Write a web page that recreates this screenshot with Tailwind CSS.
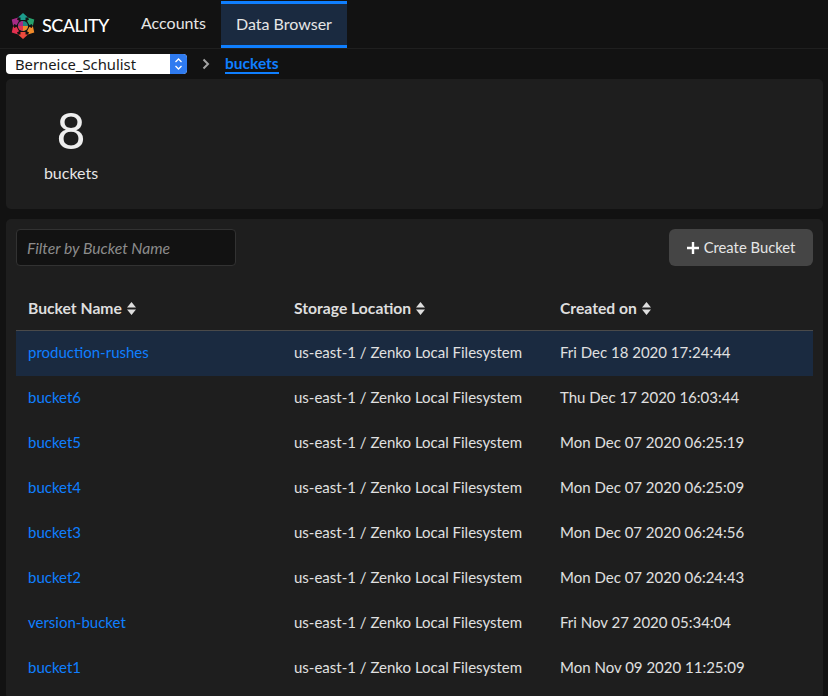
<!DOCTYPE html>
<html lang="en">
  <head>
    <meta charset="utf-8">
    <title>Data Browser</title>
    <script src="https://cdn.jsdelivr.net/npm/@tailwindcss/browser@4"></script>
  </head>
  <body class="bg-[#121212] font-['Lato','Noto_Sans',sans-serif] text-[#e6e6e6] h-[696px] w-[828px] overflow-hidden">

    <nav class="flex h-[49px] border-b border-[#1f1f1f] pt-px">
      <a class="flex items-center pl-[10px] w-[130px] gap-[6px]">
        <svg class="w-[26px] h-[26px] shrink-0 mt-[2px]" viewBox="0 0 26 26">
          <path d="M13 0l5 4.500h-2.500V7h-5V4.500H8z" fill="#1c9c8c"/>
          <path d="M13 0l5 4.500h-2.500V7h-5V4.500H8z" fill="#27a26d" transform="rotate(60 13 13)"/>
          <path d="M13 0l5 4.500h-2.500V7h-5V4.500H8z" fill="#f08a2a" transform="rotate(120 13 13)"/>
          <path d="M13 0l5 4.500h-2.500V7h-5V4.500H8z" fill="#ec4a3c" transform="rotate(180 13 13)"/>
          <path d="M13 0l5 4.500h-2.500V7h-5V4.500H8z" fill="#e2304f" transform="rotate(240 13 13)"/>
          <path d="M13 0l5 4.500h-2.500V7h-5V4.500H8z" fill="#a62a86" transform="rotate(300 13 13)"/>
          <circle cx="13" cy="13" r="5" fill="#23837c"/>
          <path d="M13 13V8a5 5 0 0 0-5 5z" fill="#a62a86"/>
          <path d="M13 13H8a5 5 0 0 0 5 5z" fill="#e2304f"/>
          <path d="M13 13v5a5 5 0 0 0 5-5z" fill="#f08a2a"/>
        </svg>
        <span class="text-[18px] font-medium tracking-[-0.5px] text-white leading-none mt-[1px]">SCALITY</span>
      </a>
      <a class="flex items-center justify-center w-[91px] text-[16px] pb-[4px] pr-[4px] text-[#e6e6e6]">Accounts</a>
      <a class="flex items-center justify-center w-[126px] text-[16px] pb-[2px] bg-[#1a2a40] border-y-[3px] border-[#0f7fff] text-[#e6e6e6]">Data Browser</a>
    </nav>

    <div class="flex items-center h-[30px] pl-[6px]">
      <div class="flex items-center w-[181px] h-[20px] rounded-[4px] bg-white overflow-hidden">
        <span class="flex-1 pl-[9px] text-[14.800px] text-[#1a1a1a] font-['Noto_Sans',sans-serif]">Berneice_Schulist</span>
        <span class="flex items-center justify-center w-[17px] h-full bg-[#2f7bf0]">
          <svg class="w-[9px] h-[14px]" viewBox="0 0 9 14" fill="none" stroke="#fff" stroke-width="1.300">
            <path d="M1.500 5l3-3 3 3M1.500 9l3 3 3-3"/>
          </svg>
        </span>
      </div>
      <svg class="w-[8px] h-[12px] ml-[15px]" viewBox="0 0 8 12" fill="none" stroke="#a3a3a3" stroke-width="2">
        <path d="M1.500 1.500L6 6l-4.500 4.500"/>
      </svg>
      <span class="ml-[15px] text-[15.500px] font-bold text-[#0f7fff] border-b-2 border-[#0f7fff] leading-[18px] mb-[1px]">buckets</span>
    </div>

    <section class="ml-[6px] mr-[5px] h-[130px] rounded-[5px] bg-[#1e1e1e] pt-[22px]">
      <div class="w-[130px] flex flex-col items-center">
        <span class="text-[50px] font-normal leading-[58px] text-[#eeeeee]">8</span>
        <span class="text-[16px] leading-[18px] mt-[5px] text-[#e6e6e6]">buckets</span>
      </div>
    </section>

    <section class="ml-[6px] mr-[5px] mt-[10px] rounded-[5px] bg-[#1e1e1e] px-[10px] pt-[10px] h-[480px]">
      <div class="flex justify-between">
        <div class="flex items-center w-[220px] h-[37px] rounded-[4px] bg-[#121212] border border-[#323232] pl-[10px] pt-[3px] text-[15.700px] italic text-[#8c8c8c]">Filter by Bucket Name</div>
        <button class="flex items-center justify-center gap-[5px] w-[144px] h-[37px] rounded-[6px] bg-[#454545] text-[14.800px] text-[#e6e6e6]">
          <svg class="w-[12px] h-[12px]" viewBox="0 0 12 12" fill="#fff"><path d="M4.800 0h2.400v4.800H12v2.400H7.200V12H4.800V7.200H0V4.800h4.800z"/></svg>
          Create Bucket
        </button>
      </div>

      <div class="grid grid-cols-[266px_266px_1fr] h-[65px] items-end pb-[12px] border-b border-[#4a4a4a] pl-[12px] text-[15.700px] font-bold leading-[20px] text-[#dedede]">
        <div class="flex items-center gap-[5px]">Bucket Name
          <svg class="w-[9px] h-[13px]" viewBox="0 0 9 13" fill="#dedede"><path d="M4.500 0L9 5.500H0zM4.500 13L0 7.500h9z"/></svg>
        </div>
        <div class="flex items-center gap-[5px]">Storage Location
          <svg class="w-[9px] h-[13px]" viewBox="0 0 9 13" fill="#dedede"><path d="M4.500 0L9 5.500H0zM4.500 13L0 7.500h9z"/></svg>
        </div>
        <div class="flex items-center gap-[5px]">Created on
          <svg class="w-[9px] h-[13px]" viewBox="0 0 9 13" fill="#dedede"><path d="M4.500 0L9 5.500H0zM4.500 13L0 7.500h9z"/></svg>
        </div>
      </div>

      <div class="text-[15px] text-[#e0e0e0]">
        <div class="grid grid-cols-[266px_266px_1fr] items-center h-[45px] pl-[12px] pb-[2px] bg-[#1a2a40]">
          <a class="text-[#0f7fff]">production-rushes</a><span>us-east-1 / Zenko Local Filesystem</span><span>Fri Dec 18 2020 17:24:44</span>
        </div>
        <div class="grid grid-cols-[266px_266px_1fr] items-center h-[45px] pl-[12px] pb-[2px]">
          <a class="text-[#0f7fff]">bucket6</a><span>us-east-1 / Zenko Local Filesystem</span><span>Thu Dec 17 2020 16:03:44</span>
        </div>
        <div class="grid grid-cols-[266px_266px_1fr] items-center h-[45px] pl-[12px] pb-[2px]">
          <a class="text-[#0f7fff]">bucket5</a><span>us-east-1 / Zenko Local Filesystem</span><span>Mon Dec 07 2020 06:25:19</span>
        </div>
        <div class="grid grid-cols-[266px_266px_1fr] items-center h-[45px] pl-[12px] pb-[2px]">
          <a class="text-[#0f7fff]">bucket4</a><span>us-east-1 / Zenko Local Filesystem</span><span>Mon Dec 07 2020 06:25:09</span>
        </div>
        <div class="grid grid-cols-[266px_266px_1fr] items-center h-[45px] pl-[12px] pb-[2px]">
          <a class="text-[#0f7fff]">bucket3</a><span>us-east-1 / Zenko Local Filesystem</span><span>Mon Dec 07 2020 06:24:56</span>
        </div>
        <div class="grid grid-cols-[266px_266px_1fr] items-center h-[45px] pl-[12px] pb-[2px]">
          <a class="text-[#0f7fff]">bucket2</a><span>us-east-1 / Zenko Local Filesystem</span><span>Mon Dec 07 2020 06:24:43</span>
        </div>
        <div class="grid grid-cols-[266px_266px_1fr] items-center h-[45px] pl-[12px] pb-[2px]">
          <a class="text-[#0f7fff]">version-bucket</a><span>us-east-1 / Zenko Local Filesystem</span><span>Fri Nov 27 2020 05:34:04</span>
        </div>
        <div class="grid grid-cols-[266px_266px_1fr] items-center h-[45px] pl-[12px] pb-[2px]">
          <a class="text-[#0f7fff]">bucket1</a><span>us-east-1 / Zenko Local Filesystem</span><span>Mon Nov 09 2020 11:25:09</span>
        </div>
      </div>
    </section>
  </body>
</html>
